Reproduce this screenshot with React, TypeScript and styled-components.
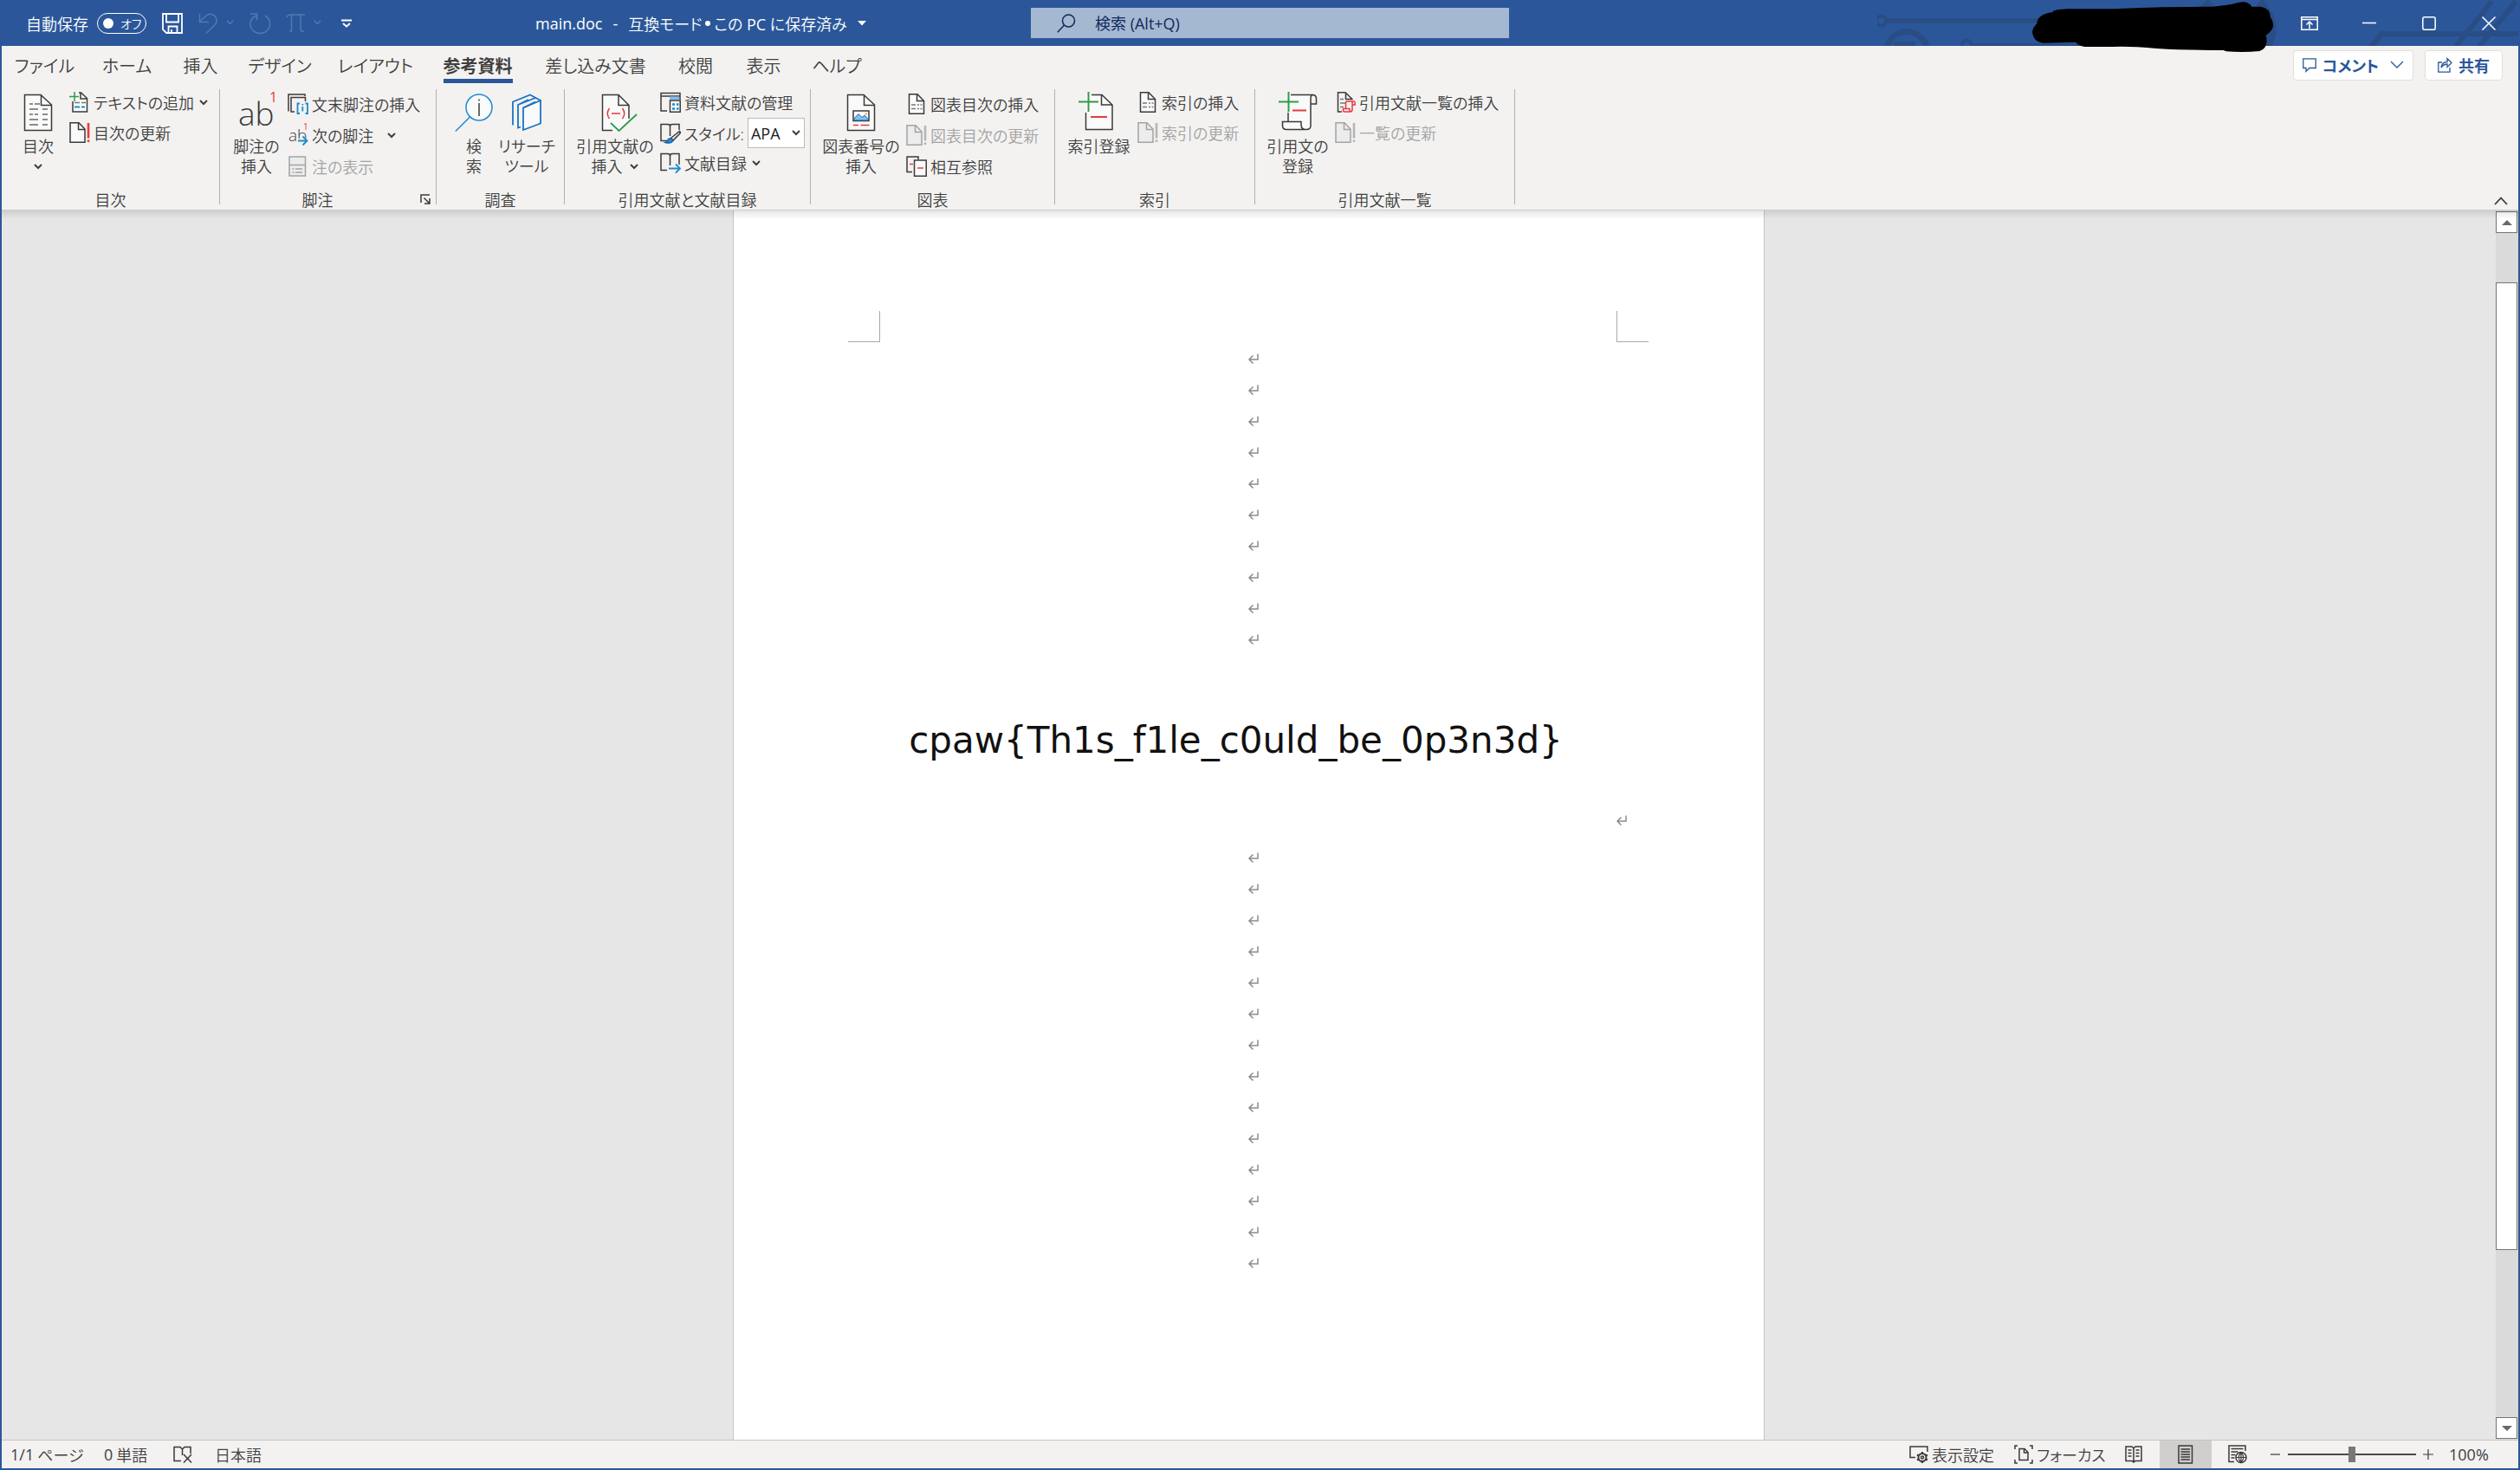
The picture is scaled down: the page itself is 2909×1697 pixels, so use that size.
import React, { useState } from "react";
import styled, { createGlobalStyle, css } from "styled-components";

const BLUE = "#2b579a";
const INK = "#3f3f3f";
const LINE = "#3b3a39";
const DIM = "#a3a3a3";
const RED = "#e8393c";
const GREEN = "#2f9b48";
const SKY = "#1e8bcd";

const GlobalStyle = createGlobalStyle`
  * { box-sizing: border-box; }
  body {
    margin: 0;
    color: ${INK};
    font-family: "Open Sans", "Noto Sans CJK JP", sans-serif;
    font-size: 18px;
    font-weight: 350;
    font-feature-settings: "palt";
  }
  button, input, select { font: inherit; color: inherit; font-feature-settings: inherit; }
  svg { display: block; flex: none; overflow: visible; }
`;

/* ---------- shell ---------- */

const Shell = styled.div`
  height: 100vh;
  display: flex;
  flex-direction: column;
  border: solid ${BLUE};
  border-width: 0 2px 2px;
  background: #f3f2f1;
  position: relative;
  overflow: hidden;
`;

const bare = css`
  border: 0;
  padding: 0;
  margin: 0;
  background: transparent;
  display: flex;
  align-items: center;
  white-space: nowrap;
`;

/* Latin words and figures carry a regular weight beside the lighter kanji. */
const Latin = styled.span`
  font-weight: 400;
`;

/* ---------- title bar ---------- */

const TitleBar = styled.header`
  position: relative;
  display: grid;
  grid-template-columns: minmax(0, 1188fr) minmax(0, 552fr) minmax(0, 1165fr);
  align-items: center;
  height: 53px;
  background: ${BLUE};
  color: #fff;
`;

const TitleLeft = styled.div`
  display: flex;
  align-items: center;
  gap: 18px;
  padding-left: 28px;
  white-space: nowrap;
`;

const AutoSave = styled.label`
  display: flex;
  align-items: center;
  gap: 10px;
`;

const ToggleInput = styled.input`
  position: absolute;
  opacity: 0;
  width: 1px;
  height: 1px;
  margin: 0;
`;

const Track = styled.span`
  display: flex;
  align-items: center;
  gap: 8px;
  width: 57px;
  height: 24px;
  padding-left: 6px;
  border: 1px solid #fff;
  border-radius: 12px;
  font-size: 14px;
  &::before {
    content: "";
    width: 12px;
    height: 12px;
    border-radius: 50%;
    background: #fff;
  }
`;

const QuickButton = styled.button<{ $dim?: boolean }>`
  ${bare}
  gap: 8px;
  min-width: 22px;
  justify-content: center;
  color: ${(p) => (p.$dim ? "#5079b3" : "#fff")};
`;

const DocTitle = styled.button`
  ${bare}
  gap: 12px;
  margin-left: 189px;
`;

const TitlePart = styled.span`
  display: flex;
  align-items: center;
  gap: 4px;
`;

const Bullet = styled.i`
  width: 6px;
  height: 6px;
  border-radius: 50%;
  background: #fff;
`;

const SearchBox = styled.label`
  display: flex;
  align-items: center;
  gap: 22px;
  height: 35px;
  padding-left: 30px;
  background: #a5b8d1;
  color: #0f2b5c;
`;

const SearchInput = styled.input`
  flex: 1;
  min-width: 0;
  padding: 0;
  border: 0;
  background: transparent;
  outline: none;
  font-weight: 400;
  &::placeholder { color: #0f2b5c; opacity: 1; }
`;

const WindowButtons = styled.div`
  display: flex;
  justify-content: flex-end;
  position: relative;
`;

const WindowButton = styled.button`
  ${bare}
  width: 69px;
  height: 53px;
  justify-content: center;
`;

const Circuit = styled.svg`
  position: absolute;
  right: 0;
  top: 0;
  && { overflow: hidden; }
`;

const Scribble = styled.svg`
  position: absolute;
  right: 282px;
  top: 0;
  z-index: 3;
`;

/* ---------- tabs ---------- */

const TabRow = styled.nav`
  display: flex;
  align-items: center;
  height: 44px;
`;

const Tab = styled.button<{ $w: number; $active?: boolean }>`
  ${bare}
  width: ${(p) => p.$w}px;
  height: 44px;
  justify-content: center;
  font-size: 20px;
  font-weight: ${(p) => (p.$active ? 700 : "inherit")};
  span {
    line-height: 28px;
    padding-top: 9px;
    border-bottom: 5px solid ${(p) => (p.$active ? BLUE : "transparent")};
  }
`;

const TabActions = styled.div`
  display: flex;
  gap: 13px;
  margin-left: auto;
  padding-right: 18px;
`;

const ActionButton = styled.button`
  ${bare}
  justify-content: center;
  min-width: 90px;
  height: 35px;
  padding: 0 10px;
  gap: 7px;
  border: 1px solid #e1dfdd;
  border-radius: 4px;
  background: #fff;
  color: ${BLUE};
  font-size: 18px;
  font-weight: 700;
`;

const SplitChevron = styled.span`
  padding-left: 6px;
`;

/* ---------- ribbon ---------- */

const Ribbon = styled.section`
  position: relative;
  display: flex;
  height: 146px;
  padding-top: 6px;
  border-bottom: 1px solid #cfcdcb;
`;

const GroupBox = styled.div<{ $w: number }>`
  width: ${(p) => p.$w}px;
  display: flex;
  flex-direction: column;
  padding-left: 6px;
`;

const GroupBody = styled.div`
  display: flex;
  height: 114px;
`;

const GroupLabel = styled.div`
  display: flex;
  align-items: center;
  justify-content: center;
  height: 25px;
  padding-right: 6px;
  white-space: nowrap;
`;

const GroupName = styled.span`
  flex: 1;
  text-align: center;
`;

const Launcher = styled.button`
  ${bare}
  height: 25px;
  margin-left: 12px;
`;

const Separator = styled.i`
  width: 1px;
  height: 133px;
  background: #b3b0ad;
`;

const BigButton = styled.button<{ $w: number }>`
  ${bare}
  flex-direction: column;
  width: ${(p) => p.$w}px;
  padding-top: 5px;
  line-height: 23px;
`;

const BigLabel = styled.span`
  margin-top: 6px;
  display: flex;
  flex-direction: column;
  align-items: center;
`;

const BigLine = styled.span`
  display: flex;
  align-items: center;
  gap: 9px;
  min-height: 23px;
`;

const SmallColumn = styled.div<{ $loose?: boolean }>`
  display: flex;
  flex-direction: column;
  align-items: flex-start;
  gap: ${(p) => (p.$loose ? 5 : 4)}px;
  padding-top: ${(p) => (p.$loose ? 2 : 0)}px;
`;

const SmallButton = styled.button<{ $gap?: number }>`
  ${bare}
  height: 31px;
  gap: 4px;
  padding-bottom: 1px;
  &:disabled { color: ${DIM}; }
  .chev { margin-left: ${(p) => p.$gap ?? 2}px; }
`;

const StyleField = styled.label`
  display: flex;
  align-items: center;
  gap: 4px;
  height: 31px;
  white-space: nowrap;
`;

const SelectWrap = styled.span`
  position: relative;
  display: flex;
  align-items: center;
  svg { position: absolute; right: 5px; pointer-events: none; }
`;

const StyleSelect = styled.select`
  appearance: none;
  width: 66px;
  height: 35px;
  padding: 0 0 0 3px;
  border: 1px solid #bdbbb9;
  background: #fff;
  color: #1b1b1b;
  font-weight: 400;
`;

const Collapse = styled.button`
  ${bare}
  align-self: flex-end;
  margin: 0 12px 5px auto;
`;

/* ---------- document ---------- */

const Workspace = styled.main`
  position: relative;
  flex: 1;
  min-height: 0;
  display: flex;
  background: #e6e6e6;
  &::before {
    content: "";
    position: absolute;
    inset: 0 0 auto;
    height: 10px;
    background: linear-gradient(rgba(0, 0, 0, 0.1), rgba(0, 0, 0, 0));
    z-index: 1;
  }
`;

const Canvas = styled.div`
  flex: 1;
  display: flex;
  justify-content: center;
  overflow: hidden;
`;

const Page = styled.article`
  width: 1191px;
  border: solid #c6c6c6;
  border-width: 0 1px;
  background: #fff;
  padding: 116px 133px 0 132px;
`;

const CropMarks = styled.div`
  display: flex;
  justify-content: space-between;
`;

const Crop = styled.i<{ $side: "left" | "right" }>`
  width: 37px;
  height: 36px;
  border-bottom: 1px solid #a8a8a8;
  border-${(p) => (p.$side === "left" ? "right" : "left")}: 1px solid #a8a8a8;
`;

const TextArea = styled.div`
  margin: 1px 37px 0 36px;
`;

const Paragraph = styled.div<{ $end?: boolean }>`
  display: flex;
  align-items: center;
  height: 36px;
  padding-left: ${(p) => (p.$end ? "100%" : "50%")};
`;

const FlagLine = styled.h1`
  margin: 0;
  height: 173px;
  padding: 12px 28px 0 0;
  line-height: 173px;
  text-align: center;
  white-space: nowrap;
  font-family: "DejaVu Sans", Verdana, sans-serif;
  font-size: 42px;
  font-weight: 400;
  color: #111;
`;

const FlagBreak = styled.div`
  height: 43px;
`;

/* ---------- scroll bar ---------- */

const ScrollBar = styled.div`
  width: 26px;
  padding: 1px 1px 1px 0;
  display: flex;
  flex-direction: column;
  background: #dadada;
`;

const ScrollArrow = styled.button`
  ${bare}
  width: 25px;
  height: 25px;
  justify-content: center;
  border: 1px solid #777573;
  background: #fff;
`;

const ScrollGap = styled.div<{ $grow: number }>`
  flex: ${(p) => p.$grow} 1 0;
`;

const ScrollThumb = styled.div`
  flex: 1117 1 0;
  border: 1px solid #777573;
  background: #fff;
`;

/* ---------- status bar ---------- */

const StatusBar = styled.footer`
  display: flex;
  justify-content: space-between;
  height: 33px;
  border-top: 1px solid #c6c4c2;
`;

const StatusSide = styled.div`
  display: flex;
`;

const StatusItem = styled.button<{ $w?: number; $on?: boolean; $mid?: boolean }>`
  ${bare}
  width: ${(p) => (p.$w ? `${p.$w}px` : "auto")};
  gap: 4px;
  padding-left: ${(p) => (p.$mid ? 0 : 10)}px;
  justify-content: ${(p) => (p.$mid ? "center" : "flex-start")};
  background: ${(p) => (p.$on ? "#d0cfce" : "transparent")};
`;

const Zoom = styled.input`
  appearance: none;
  align-self: center;
  width: 148px;
  height: 18px;
  margin: 0;
  background: linear-gradient(#4b4947, #4b4947) center / 100% 2px no-repeat;
  &::-webkit-slider-thumb {
    appearance: none;
    width: 8px;
    height: 18px;
    background: #7a7876;
  }
`;

/* ---------- icons ---------- */

const Svg = ({ w = 24, h = 24, c = LINE, s = 1.5, children, className }: {
  w?: number; h?: number; c?: string; s?: number; children: React.ReactNode; className?: string;
}) => (
  <svg className={className} width={w} height={h} viewBox={`0 0 ${w} ${h}`} fill="none" stroke={c} strokeWidth={s} aria-hidden="true">
    {children}
  </svg>
);

const Chevron = ({ w = 10, c = "currentColor", s = 2 }: { w?: number; c?: string; s?: number }) => (
  <svg className="chev" width={w} height={w / 2 + 2} viewBox={`0 0 ${w} ${w / 2 + 2}`} fill="none" stroke={c} strokeWidth={s} aria-hidden="true">
    <path d={`M1 1L${w / 2} ${w / 2}L${w - 1} 1`} />
  </svg>
);

const BigPage = ({ children }: { children?: React.ReactNode }) => (
  <Svg w={42} h={44}>
    <path fill="#fafafa" d="M6 2H24.500L37 13.500V43H6Z" transform="translate(-.5 -.5)" />
    <path d="M24.500 1.500V13.500H36.500" />
    {children}
  </Svg>
);

const TocIcon = () => (
  <BigPage>
    <path stroke="#6b6967" d="M11 12h4M17 12h6M11 18h10M26 18h6M11 24h4M17 24h4M26 24h6M11 30h10M26 30h6M11 36h10M26 36h6" />
  </BigPage>
);

const AddTextIcon = () => (
  <Svg>
    <path fill="#fafafa" d="M4 11V23H20.500V7.500L13.500 1H11" />
    <path d="M13 1V8H20.500" />
    <path stroke={GREEN} d="M6 0V11M0 5.500H11" />
    <path stroke="#777" d="M6 12.500h6M14 12.500h5" />
    <path stroke={SKY} strokeWidth="2" d="M6 17.500h6M14 17.500h4" />
  </Svg>
);

const UpdateIcon = ({ off }: { off?: boolean }) => (
  <Svg c={off ? DIM : LINE}>
    <path fill={off ? "#ececec" : "#fafafa"} d="M1 .8H11L18 8V23.200H1Z" />
    <path d="M10.500 .8V8.500H18" />
    <path stroke={off ? "#b5b5b5" : RED} strokeWidth="2.600" d="M22 1V18.500M22 20.500V23" />
  </Svg>
);

const GlyphText = styled.text`
  font-family: "Open Sans", sans-serif;
  font-weight: 300;
  stroke: none;
`;

const NumberText = styled(GlyphText)`
  font-weight: 400;
`;

const FootnoteIcon = () => (
  <Svg w={46} h={44}>
    <GlyphText x="2" y="37" fontSize="37" fill={LINE}>ab</GlyphText>
    <NumberText x="38" y="10" fontSize="16" fill={RED}>1</NumberText>
  </Svg>
);

const EndnoteIcon = () => (
  <Svg>
    <path d="M1 20.500V1H20V3M8 21H4V4.500H20.500V9" />
    <path stroke={SKY} strokeWidth="1.800" d="M14 11.500H11.500V23H14M20.500 11.500H23V23H20.500M17.300 15V20.500M17.300 12V13.500" />
  </Svg>
);

const NextNoteIcon = () => (
  <Svg>
    <GlyphText x="1" y="19" fontSize="19" fill={LINE}>ab</GlyphText>
    <NumberText x="18" y="6" fontSize="10" fill={RED}>1</NumberText>
    <path stroke="#f3f2f1" strokeWidth="5" d="M11 18.500H22" />
    <path stroke={SKY} strokeWidth="1.800" d="M12 18.500H22.500M17.500 13.500L22.500 18.500L17.500 23.500" />
  </Svg>
);

const ShowNotesIcon = () => (
  <Svg c={DIM}>
    <path fill="#ececec" d="M2 1H20.500V23H2ZM2 10.500H20.500" />
    <path d="M5.500 15h2M9 15h8M5.500 19h2M9 19h8" />
  </Svg>
);

const LookupIcon = () => (
  <Svg w={44} h={44} c={SKY}>
    <circle cx="28" cy="16" r="15" fill="#fafafa" />
    <path d="M17.500 27L.8 43.500" />
    <path stroke={LINE} d="M28 11V26M28 6.500V8.500" />
  </Svg>
);

const ResearchIcon = () => (
  <Svg w={36} h={44} c="#1a73c4" s={1.8}>
    <path fill="#fafafa" d="M14 16.500L34 8V34.500L14 42Z" />
    <path d="M14 16.500L28 9.500M34 8L22 1.500L2 9.500V36.500M28 5L8 13V39.500L11 38.500M8 13L20 7" />
  </Svg>
);

const CitationIcon = () => (
  <Svg w={52} h={44}>
    <g transform="translate(10 0)">
      <path fill="#fafafa" d="M1.500 1.500H20L32 13.500V35L20 42.500H1.500Z" stroke="none" />
      <path d="M13 42.500H1.500V1.500H20L32 13.500V29M20 1.500V13.500H32" />
      <path stroke={RED} d="M12 23H22M9.500 17Q5 23 9.500 29M24.500 17Q29 23 24.500 29" />
      <path stroke={GREEN} strokeWidth="1.800" d="M11 34L20.500 43L41 24" />
    </g>
  </Svg>
);

const SourcesIcon = () => (
  <Svg>
    <path d="M8 22H1V1.500H23V9M1 5H23" />
    <path stroke="none" fill="#83beec" d="M11 5.500H22V9H11Z" />
    <path fill="#fafafa" d="M11.500 10H23.200V23.200H11.500Z" />
    <path stroke={SKY} strokeWidth="2.500" d="M14 14.500h3M19 14.500h2.500M14 19.500h3M19 19.500h2.500" />
  </Svg>
);

const Book = ({ children }: { children: React.ReactNode }) => (
  <Svg>
    <path d="M8 20.500H1V1.500H9Q11.500 1.500 11.500 4V15M11.500 4Q11.500 1.500 14 1.500H22V8" />
    {children}
  </Svg>
);

const StyleIcon = () => (
  <Book>
    <path strokeWidth="1.600" fill="#fafafa" d="M22.500 9.500Q24 11 22.500 12.500L15 20L12.500 17.500Z" />
    <path stroke="#1565a7" fill="#2b88d8" d="M12.500 17.500L15 20Q13 24.500 6 22.500Q9 21.500 9.500 18.500Z" />
  </Book>
);

const BiblioIcon = () => (
  <Book>
    <path d="M22 8V14" />
    <path stroke={SKY} strokeWidth="1.800" d="M10 18.500H23M18 13.500L23 18.500L18 23.500" />
  </Book>
);

const CaptionIcon = () => (
  <BigPage>
    <path fill="#fff" d="M12 20H30V31.500H12Z" />
    <path stroke="#1565a7" fill="#83beec" strokeWidth="1" d="M12.800 29L18 23.500L22 27.500L25 25L29.500 30V31H12.800Z" />
    <path stroke="#f2a33a" strokeWidth="2" d="M26 23.500h2" />
    <path stroke={RED} d="M12 36.500h6M20.500 36.500h10" />
  </BigPage>
);

const ListIcon = () => (
  <Svg>
    <path fill="#fafafa" d="M3.500 .8H13L20.500 8.500V23.200H3.500Z" />
    <path d="M12.500 .8V8.500H20.500" />
    <path stroke="#777" d="M6 13h5M13 13h2M16.500 13h2M6 17.500h5M13 17.500h2M16.500 17.500h2" />
  </Svg>
);

const CrossRefIcon = () => (
  <Svg>
    <path d="M7 18.500H1V1H14V4" />
    <path fill="#fafafa" d="M9.500 5H23.200V23.200H9.500Z" />
    <path stroke={RED} d="M4 9.500h4M13 14h7" />
  </Svg>
);

const IndexMarkIcon = () => (
  <Svg w={50} h={44}>
    <g transform="translate(0 -3)">
      <path stroke="none" fill="#fafafa" d="M10 4H28L40 16V44H10Z" />
      <path d="M16 4.500H28L40 16V44.500H9.500V25M27.500 4.500V16H40" />
      <path stroke={GREEN} strokeWidth="2" d="M12.500 1V24M1 12.500H24" />
      <path stroke={RED} strokeWidth="2" d="M15 30H34" />
    </g>
  </Svg>
);

const MarkCitationIcon = () => (
  <Svg w={46} h={44}>
    <g transform="translate(0 -3)">
      <path stroke="none" fill="#fafafa" d="M12 4H38V40L34 44H8V36H12Z" />
      <path d="M15 4.500H40Q44.500 4.500 44.500 9V15H38M38 15V9Q38 4.500 40.500 4.500M38 15V40Q38 44.500 33 44.500H10Q5.500 44.500 5.500 40V35.500H27V39Q27 44.500 32.500 44.500M12 25V35" />
      <path stroke={GREEN} strokeWidth="2" d="M12.500 1V24M1 12.500H24" />
      <path stroke={RED} strokeWidth="2" d="M17 22.500H33" />
    </g>
  </Svg>
);

const AuthoritiesIcon = () => (
  <Svg>
    <path d="M8 23H3.500V.8H12L20.500 9M12.500 .8V8.500H20" />
    <path stroke="#777" d="M6 8.500h4M6 13h6M6 17.500h4" />
    <path stroke={RED} d="M22 11H14Q12.500 11 12.500 13V19.500H9.500Q9 23 11 23H18Q20 23 20 20V15H23.200V13Q23.200 11 22 11M20 15V13Q20 11 21.500 11M12.500 19.500H17V21Q17 23 18.500 23" />
  </Svg>
);

const ReturnMark = () => (
  <Svg w={12} h={12} c="#8c8c8c" s={1.5}>
    <path d="M11 .5V7H1.500M5.500 2.500L1 7L5.500 11.500" />
  </Svg>
);

/* ---------- pieces ---------- */

const tabs: [string, number][] = [
  ["ファイル", 99], ["ホーム", 91], ["挿入", 79], ["デザイン", 104], ["レイアウト", 117],
  ["参考資料", 119], ["差し込み文書", 153], ["校閲", 78], ["表示", 79], ["ヘルプ", 90],
];

const Group = ({ name, w, launcher, children }: { name: string; w: number; launcher?: boolean; children: React.ReactNode }) => (
  <>
    <GroupBox $w={w}>
      <GroupBody>{children}</GroupBody>
      <GroupLabel>
        <GroupName>{name}</GroupName>
        {launcher && (
          <Launcher aria-label="脚注と文末脚注">
            <Svg w={12} h={12}><path d="M1 10V1H11M4.500 4.500L10.500 10.500M11 5V11H5" /></Svg>
          </Launcher>
        )}
      </GroupLabel>
    </GroupBox>
    <Separator />
  </>
);

const Big = ({ w, icon, lines, chevron }: { w: number; icon: React.ReactNode; lines: string[]; chevron?: boolean }) => (
  <BigButton $w={w}>
    {icon}
    <BigLabel>
      {lines.map((l, i) => (
        <BigLine key={i}>{l}{chevron && i === lines.length - 1 && <Chevron />}</BigLine>
      ))}
    </BigLabel>
  </BigButton>
);

const Small = ({ icon, text, chevron, gap, off }: { icon: React.ReactNode; text: string; chevron?: boolean; gap?: number; off?: boolean }) => (
  <SmallButton disabled={off} $gap={gap}>
    {icon}{text}{chevron && <Chevron />}
  </SmallButton>
);

export default function App() {
  const [active, setActive] = useState("参考資料");
  const [zoom, setZoom] = useState(100);
  return (
    <Shell>
      <GlobalStyle />
      <TitleBar>
        <Circuit width="740" height="53" viewBox="2167 0 740 53" fill="none" stroke="#294d84" strokeWidth="6" aria-hidden="true">
          <circle cx="2171.500" cy="24" r="5.500" strokeWidth="4" />
          <path d="M2178 24H2400" />
          <circle cx="2201" cy="60" r="23.500" strokeWidth="7" />
          <path d="M2186 51H2211" />
          <circle cx="2270" cy="52" r="5.500" strokeWidth="4" />
          <path strokeWidth="3" d="M2276 51.500H2420" />
          <path d="M2552 2L2540 14" strokeWidth="10" />
          <path d="M2608 2Q2632 28 2616 56" strokeWidth="10" />
          <path d="M2737 55L2749 39H2907" />
          <path d="M2876 2L2834 55M2904 2L2861 55" />
        </Circuit>
        <TitleLeft>
          <AutoSave>
            自動保存
            <ToggleInput type="checkbox" />
            <Track>オフ</Track>
          </AutoSave>
          <QuickButton aria-label="上書き保存">
            <Svg c="#fff" s={1.8}>
              <path d="M1 1H23V23H5L1 19ZM5 1V10.500H19V1M7.500 23V15.500H17.500V23M11 19V23" />
            </Svg>
          </QuickButton>
          <QuickButton $dim aria-label="元に戻す">
            <Svg c="currentColor"><path d="M1.500 1V10.500H12M1.500 10L9 3Q14 -.5 18.500 3Q24 8.500 18.500 14L9 23.500" /></Svg>
            <Chevron w={9} s={1.5} />
          </QuickButton>
          <QuickButton $dim aria-label="やり直し">
            <Svg c="currentColor"><path d="M1 1H8.500V8.500M8 3Q1 6 1 12.500A11.300 11 0 1 0 18 3" /></Svg>
          </QuickButton>
          <QuickButton $dim aria-label="数式">
            <Svg c="currentColor"><path d="M1 5Q2 2 5 2H22M6.500 2.500V21H4M17 2.500V19Q17 21.500 21 21" /></Svg>
            <Chevron w={9} s={1.5} />
          </QuickButton>
          <QuickButton aria-label="クイック アクセス ツール バーのユーザー設定">
            <Svg w={12} h={10} c="#fff"><path strokeWidth="2" d="M0 1.500H12M2 5L6 8.500L10 5" /></Svg>
          </QuickButton>
          <DocTitle>
            <Latin>main.doc</Latin>
            <Latin>-</Latin>
            <TitlePart><span>互換モード</span><Bullet /><span>この <Latin>PC</Latin> に保存済み</span></TitlePart>
            <Svg w={10} h={6} s={0}><path fill="#fff" d="M0 0H10L5 5.500Z" /></Svg>
          </DocTitle>
        </TitleLeft>
        <SearchBox>
          <Svg w={22} h={22} c="#0f2b5c"><circle cx="13.500" cy="8" r="7" /><path d="M8.500 13L.8 21.200" /></Svg>
          <SearchInput type="search" placeholder="検索 (Alt+Q)" aria-label="検索" />
        </SearchBox>
        <WindowButtons>
          <WindowButton aria-label="リボンの表示オプション">
            <Svg w={20} h={16} c="#fff"><path d="M.8 .8H19.200V15.200H.8ZM1 3.500H19M10 14V6M6.500 9.500L10 6L13.500 9.500" /></Svg>
          </WindowButton>
          <WindowButton aria-label="最小化">
            <Svg w={16} h={16} c="#fff"><path d="M0 7.500H16" /></Svg>
          </WindowButton>
          <WindowButton aria-label="最大化">
            <Svg w={16} h={16} c="#fff"><rect x=".8" y=".8" width="14.400" height="14.400" rx="2" /></Svg>
          </WindowButton>
          <WindowButton aria-label="閉じる">
            <Svg w={16} h={16} c="#fff"><path d="M.5 .5L15.500 15.500M15.500 .5L.5 15.500" /></Svg>
          </WindowButton>
        </WindowButtons>
        <Scribble width="280" height="62" viewBox="615 0 840 186" aria-hidden="true">
          <path d="M618 112Q619 95 634 82Q634 50 688 42Q690 33 740 31L910 31Q1000 24 1240 23Q1300 18 1330 9Q1366 0 1378 23H1410Q1442 28 1443 60Q1468 96 1427 122Q1438 165 1405 177Q1350 182 1290 178L1280 174Q1150 174 1050 168Q960 160 900 162H800Q776 158 768 146L655 149Q622 146 618 112Z" />
        </Scribble>
      </TitleBar>

      <TabRow>
        {tabs.map(([t, w]) => (
          <Tab key={t} $w={w} $active={t === active} onClick={() => setActive(t)}><span>{t}</span></Tab>
        ))}
        <TabActions>
          <ActionButton>
            <Svg w={16} h={16} c={BLUE} s={1.3}><path d="M.8 .8H15.200V11.500H8L4 15.500V11.500H.8Z" /></Svg>
            コメント
            <SplitChevron><Chevron w={16} s={1.3} /></SplitChevron>
          </ActionButton>
          <ActionButton>
            <Svg w={17} h={18} c={BLUE} s={1.3}><path d="M5 6H.8V17.200H14V12M4 12Q5 5.500 11 5.500V1.500L16 6.500L11 11.500V8Q7 8 4 12Z" /></Svg>
            共有
          </ActionButton>
        </TabActions>
      </TabRow>

      <Ribbon>
        <Group name="目次" w={251}>
          <Big w={72} icon={<TocIcon />} lines={["目次", ""]} chevron />
          <SmallColumn>
            <Small icon={<AddTextIcon />} text="テキストの追加" chevron />
            <Small icon={<UpdateIcon />} text="目次の更新" />
          </SmallColumn>
        </Group>
        <Group name="脚注" w={249} launcher>
          <Big w={72} icon={<FootnoteIcon />} lines={["脚注の", "挿入"]} />
          <SmallColumn $loose>
            <Small icon={<EndnoteIcon />} text="文末脚注の挿入" />
            <Small icon={<NextNoteIcon />} text="次の脚注" chevron gap={12} />
            <Small icon={<ShowNotesIcon />} text="注の表示" off />
          </SmallColumn>
        </Group>
        <Group name="調査" w={147}>
          <Big w={74} icon={<LookupIcon />} lines={["検", "索"]} />
          <Big w={48} icon={<ResearchIcon />} lines={["リサーチ", "ツール"]} />
        </Group>
        <Group name="引用文献と文献目録" w={283}>
          <Big w={104} icon={<CitationIcon />} lines={["引用文献の", "挿入"]} chevron />
          <SmallColumn>
            <Small icon={<SourcesIcon />} text="資料文献の管理" />
            <StyleField>
              <StyleIcon />
              スタイル:
              <SelectWrap>
                <StyleSelect defaultValue="APA"><option>APA</option></StyleSelect>
                <Chevron />
              </SelectWrap>
            </StyleField>
            <Small icon={<BiblioIcon />} text="文献目録" chevron />
          </SmallColumn>
        </Group>
        <Group name="図表" w={281}>
          <Big w={104} icon={<CaptionIcon />} lines={["図表番号の", "挿入"]} />
          <SmallColumn $loose>
            <Small icon={<ListIcon />} text="図表目次の挿入" />
            <Small icon={<UpdateIcon off />} text="図表目次の更新" off />
            <Small icon={<CrossRefIcon />} text="相互参照" />
          </SmallColumn>
        </Group>
        <Group name="索引" w={230}>
          <Big w={89} icon={<IndexMarkIcon />} lines={["索引登録"]} />
          <SmallColumn>
            <Small icon={<ListIcon />} text="索引の挿入" />
            <Small icon={<UpdateIcon off />} text="索引の更新" off />
          </SmallColumn>
        </Group>
        <Group name="引用文献一覧" w={299}>
          <Big w={86} icon={<MarkCitationIcon />} lines={["引用文の", "登録"]} />
          <SmallColumn>
            <Small icon={<AuthoritiesIcon />} text="引用文献一覧の挿入" />
            <Small icon={<UpdateIcon off />} text="一覧の更新" off />
          </SmallColumn>
        </Group>
        <Collapse aria-label="リボンを折りたたむ">
          <Svg w={16} h={10} s={1.8}><path d="M1 9L8 1.500L15 9" /></Svg>
        </Collapse>
      </Ribbon>

      <Workspace>
        <Canvas>
          <Page>
            <CropMarks><Crop $side="left" /><Crop $side="right" /></CropMarks>
            <TextArea>
              {Array.from({ length: 10 }, (_, i) => <Paragraph key={i}><ReturnMark /></Paragraph>)}
              <FlagLine>cpaw{"{"}Th1s_f1le_c0uld_be_0p3n3d{"}"}</FlagLine>
              <FlagBreak><Paragraph $end><ReturnMark /></Paragraph></FlagBreak>
              {Array.from({ length: 14 }, (_, i) => <Paragraph key={i}><ReturnMark /></Paragraph>)}
            </TextArea>
          </Page>
        </Canvas>
        <ScrollBar>
          <ScrollArrow aria-label="上へスクロール"><Svg w={12} h={6} s={0}><path fill="#6b6967" d="M0 6L6 0L12 6Z" /></Svg></ScrollArrow>
          <ScrollGap $grow={57} />
          <ScrollThumb />
          <ScrollGap $grow={193} />
          <ScrollArrow aria-label="下へスクロール"><Svg w={12} h={6} s={0}><path fill="#6b6967" d="M0 0H12L6 6Z" /></Svg></ScrollArrow>
        </ScrollBar>
      </Workspace>

      <StatusBar>
        <StatusSide>
          <StatusItem $w={108}><Latin>1/1</Latin>ページ</StatusItem>
          <StatusItem $w={80}><Latin>0</Latin>単語</StatusItem>
          <StatusItem $w={48} aria-label="文章校正">
            <Svg w={22} h={20}><path d="M9 17.500H1V1.500H8L10.500 4L13 1.500H20V9M10.500 4V11M12 10L21 19.500M21 10L12 19.500" /></Svg>
          </StatusItem>
          <StatusItem>日本語</StatusItem>
        </StatusSide>
        <StatusSide>
          <StatusItem $w={121}>
            <Svg w={22} h={20}>
              <path d="M7 13.500H1V1H21V7" />
              <circle cx="15" cy="13.500" r="4.500" strokeWidth="2" />
              <circle cx="15" cy="13.500" r="1.500" />
              <path strokeWidth="2" d="M15 7V9M15 18V20M9 10.500L11 11.500M19 15.500L21 16.500M9 16.500L11 15.500M19 11.500L21 10.500" />
            </Svg>
            表示設定
          </StatusItem>
          <StatusItem $w={118}>
            <Svg w={22} h={22}><path d="M4 1H1V5M18 1H21V5M4 21H1V17M18 21H21V17M6 4.500H12L16 8.500V17.500H6ZM11.500 4.500V9H16" /></Svg>
            フォーカス
          </StatusItem>
          <StatusItem $w={60} $mid aria-label="閲覧モード">
            <Svg w={20} h={20}><path d="M10 3L8 1H1V17.500H8L10 19L12 17.500H19V1H12L10 3V19M3.500 5h4M3.500 8.500h4M3.500 12h4M12.500 5h4M12.500 8.500h4M12.500 12h4" /></Svg>
          </StatusItem>
          <StatusItem $w={60} $mid $on aria-label="印刷レイアウト">
            <Svg w={18} h={22}><path d="M1 1H16.500V21H1ZM3.500 5h10.500M3.500 8h10.500M3.500 11h10.500M3.500 14h10.500M3.500 17h10.500" /></Svg>
          </StatusItem>
          <StatusItem $w={60} $mid aria-label="Web レイアウト">
            <Svg w={22} h={22}>
              <path d="M7 19.500H1V1H20V7M3.500 4.500h14M3.500 8h8M3.500 11.500h5M3.500 15h4" />
              <circle cx="15" cy="14.500" r="6" />
              <path strokeWidth="1.200" d="M9 14.500H21M15 8.500V20.500M15 8.500Q9.500 14.500 15 20.500Q20.500 14.500 15 8.500" />
            </Svg>
          </StatusItem>
          <StatusItem $w={28} $mid aria-label="縮小" onClick={() => setZoom((z) => z - 10)}>
            <Svg w={12} h={12} s={1.2}><path d="M0 6H11" /></Svg>
          </StatusItem>
          <Zoom type="range" min={10} max={190} value={zoom} onChange={(e) => setZoom(+e.target.value)} aria-label="ズーム" />
          <StatusItem $w={28} $mid aria-label="拡大" onClick={() => setZoom((z) => z + 10)}>
            <Svg w={12} h={12} s={1.2}><path d="M0 6H12M6 0V12" /></Svg>
          </StatusItem>
          <StatusItem $w={90}><Latin>{zoom}%</Latin></StatusItem>
        </StatusSide>
      </StatusBar>
    </Shell>
  );
}
